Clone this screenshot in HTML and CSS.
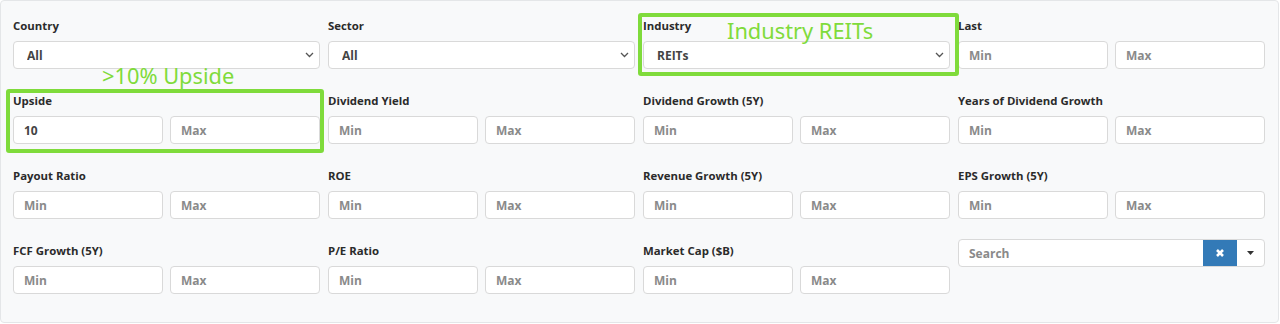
FILE: index.html
```html
<!DOCTYPE html>
<html>
<head>
<meta charset="utf-8">
<link rel="stylesheet" href="styles.css">
</head>
<body>
<div class="panel">
  <div class="grid">
    <div class="field">
      <div class="label">Country</div>
      <div class="select-wrap">
        <select class="ctl select"><option>All</option></select>
        <svg class="chev" width="9" height="6" viewBox="0 0 9 6"><path d="M1 1l3.5 3.5L8 1" fill="none" stroke="#555" stroke-width="1.3"/></svg>
      </div>
    </div>
    <div class="field">
      <div class="label">Sector</div>
      <div class="select-wrap">
        <select class="ctl select"><option>All</option></select>
        <svg class="chev" width="9" height="6" viewBox="0 0 9 6"><path d="M1 1l3.5 3.5L8 1" fill="none" stroke="#555" stroke-width="1.3"/></svg>
      </div>
    </div>
    <div class="field">
      <div class="label">Industry</div>
      <div class="select-wrap">
        <select class="ctl select"><option>REITs</option></select>
        <svg class="chev" width="9" height="6" viewBox="0 0 9 6"><path d="M1 1l3.5 3.5L8 1" fill="none" stroke="#555" stroke-width="1.3"/></svg>
      </div>
    </div>
    <div class="field">
      <div class="label">Last</div>
      <div class="pair"><input class="ctl" placeholder="Min"><input class="ctl" placeholder="Max"></div>
    </div>

    <div class="field">
      <div class="label">Upside</div>
      <div class="pair"><input class="ctl" value="10"><input class="ctl" placeholder="Max"></div>
    </div>
    <div class="field">
      <div class="label">Dividend Yield</div>
      <div class="pair"><input class="ctl" placeholder="Min"><input class="ctl" placeholder="Max"></div>
    </div>
    <div class="field">
      <div class="label">Dividend Growth (5Y)</div>
      <div class="pair"><input class="ctl" placeholder="Min"><input class="ctl" placeholder="Max"></div>
    </div>
    <div class="field">
      <div class="label">Years of Dividend Growth</div>
      <div class="pair"><input class="ctl" placeholder="Min"><input class="ctl" placeholder="Max"></div>
    </div>

    <div class="field">
      <div class="label">Payout Ratio</div>
      <div class="pair"><input class="ctl" placeholder="Min"><input class="ctl" placeholder="Max"></div>
    </div>
    <div class="field">
      <div class="label">ROE</div>
      <div class="pair"><input class="ctl" placeholder="Min"><input class="ctl" placeholder="Max"></div>
    </div>
    <div class="field">
      <div class="label">Revenue Growth (5Y)</div>
      <div class="pair"><input class="ctl" placeholder="Min"><input class="ctl" placeholder="Max"></div>
    </div>
    <div class="field">
      <div class="label">EPS Growth (5Y)</div>
      <div class="pair"><input class="ctl" placeholder="Min"><input class="ctl" placeholder="Max"></div>
    </div>

    <div class="field">
      <div class="label">FCF Growth (5Y)</div>
      <div class="pair"><input class="ctl" placeholder="Min"><input class="ctl" placeholder="Max"></div>
    </div>
    <div class="field">
      <div class="label">P/E Ratio</div>
      <div class="pair"><input class="ctl" placeholder="Min"><input class="ctl" placeholder="Max"></div>
    </div>
    <div class="field">
      <div class="label">Market Cap ($B)</div>
      <div class="pair"><input class="ctl" placeholder="Min"><input class="ctl" placeholder="Max"></div>
    </div>
    <div class="field search-field">
      <div class="search">
        <input class="search-input" placeholder="Search">
        <div class="btn-clear">
          <svg width="10" height="10" viewBox="0 0 10 10"><path d="M2 2l6 6M8 2l-6 6" stroke="#fff" stroke-width="2.6" stroke-linecap="butt"/></svg>
        </div>
        <div class="btn-caret">
          <svg width="7" height="4" viewBox="0 0 7 4"><path d="M0 0h7L3.5 4z" fill="#333"/></svg>
        </div>
      </div>
    </div>
  </div>

  <div class="note note-industry"><span class="note-text">Industry REITs</span></div>
  <div class="note note-upside"></div>
  <span class="note-text note-upside-text">&gt;10% Upside</span>
</div>
</body>
</html>
```

FILE: styles.css
```css
* { box-sizing: border-box; }

html, body {
  margin: 0;
  padding: 0;
  background: #fff;
}

body {
  font-family: "Open Sans", "Noto Sans", "Liberation Sans", sans-serif;
  color: #333;
}

.panel {
  position: relative;
  width: 1279px;
  height: 323px;
  background: #f8f9fa;
  border: 1px solid #e4e6e8;
  border-radius: 4px;
  padding: 16px 0 0 12px;
}

.grid {
  display: grid;
  grid-template-columns: repeat(4, 307px);
  column-gap: 8px;
  row-gap: 23px;
}

.field {
  display: flex;
  flex-direction: column;
}

.label {
  font-size: 11.4px;
  line-height: 18px;
  font-weight: 700;
  color: #2b2b2b;
  margin-bottom: 6px;
  white-space: nowrap;
}

.ctl {
  display: block;
  width: 100%;
  height: 28px;
  background: #fff;
  border: 1px solid #d9d9d9;
  border-radius: 4px;
  font-family: inherit;
  font-size: 12px;
  font-weight: 700;
  color: #444;
  padding: 0 10px;
  outline: none;
}

.ctl::placeholder {
  color: #8a8a8a;
  opacity: 1;
}

.select-wrap {
  position: relative;
}

.select {
  -webkit-appearance: none;
  appearance: none;
  padding-left: 13px;
}

.chev {
  position: absolute;
  right: 6px;
  top: 11px;
  pointer-events: none;
}

.pair {
  display: grid;
  grid-template-columns: 1fr 1fr;
  column-gap: 7px;
}

.search-field {
  margin-top: -3px;
}

.search {
  display: flex;
  height: 28px;
  background: #fff;
  border: 1px solid #d9d9d9;
  border-radius: 4px;
  overflow: hidden;
}

.search-input {
  flex: 1;
  min-width: 0;
  border: none;
  outline: none;
  background: transparent;
  font-family: inherit;
  font-size: 12px;
  font-weight: 700;
  padding: 0 10px;
  color: #444;
}

.search-input::placeholder {
  color: #8a8a8a;
  opacity: 1;
}

.btn-clear {
  width: 34px;
  background: #337ab7;
  display: flex;
  align-items: center;
  justify-content: center;
}

.btn-caret {
  width: 27px;
  display: flex;
  align-items: center;
  justify-content: center;
}

.note {
  position: absolute;
  border: 4px solid #7fdb3b;
  border-radius: 3px;
}

.note-industry {
  left: 637px;
  top: 12px;
  width: 321px;
  height: 63px;
}

.note-upside {
  left: 5px;
  top: 88px;
  width: 318px;
  height: 64px;
}

.note-text {
  font-family: "Noto Sans", "Open Sans", sans-serif;
  font-size: 21.8px;
  line-height: 26px;
  color: #7fdb3b;
  white-space: nowrap;
}

.note-industry .note-text {
  position: absolute;
  left: 85px;
  top: 1px;
}

.note-upside-text {
  position: absolute;
  left: 101px;
  top: 62px;
}
```
